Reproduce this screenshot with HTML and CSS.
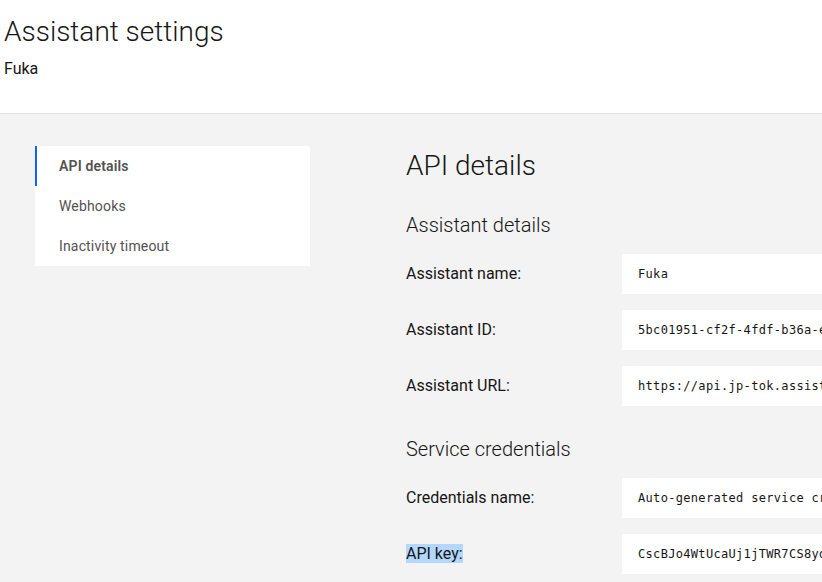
FILE: index.html
```html
<!DOCTYPE html>
<html lang="en">
<head>
<meta charset="utf-8">
<title>Assistant settings</title>
<link rel="stylesheet" href="styles.css">
</head>
<body>
<header class="page-header">
  <h1 class="page-title">Assistant settings</h1>
  <p class="page-subtitle">Fuka</p>
</header>
<div class="content">
  <nav class="side-nav">
    <a class="nav-item active">API details</a>
    <a class="nav-item">Webhooks</a>
    <a class="nav-item">Inactivity timeout</a>
  </nav>
  <main class="details">
    <h2 class="details-title">API details</h2>
    <h3 class="section-title">Assistant details</h3>
    <div class="field-row first">
      <span class="field-label">Assistant name:</span>
      <div class="field-value">Fuka</div>
    </div>
    <div class="field-row">
      <span class="field-label">Assistant ID:</span>
      <div class="field-value">5bc01951-cf2f-4fdf-b36a-e3a1d2c4f870</div>
    </div>
    <div class="field-row">
      <span class="field-label">Assistant URL:</span>
      <div class="field-value">https://api.jp-tok.assistant.watson.cloud.ibm.com</div>
    </div>
    <h3 class="section-title second">Service credentials</h3>
    <div class="field-row first">
      <span class="field-label">Credentials name:</span>
      <div class="field-value">Auto-generated service credentials</div>
    </div>
    <div class="field-row">
      <span class="field-label"><span class="selected">API key:</span></span>
      <div class="field-value">CscBJo4WtUcaUj1jTWR7CS8yd0kQxZ3mPq</div>
    </div>
  </main>
</div>
</body>
</html>
```
FILE: styles.css
```css
* { box-sizing: border-box; }
html, body {
  margin: 0;
  padding: 0;
  height: 100%;
  overflow: hidden;
}
body {
  font-family: "Roboto", "Liberation Sans", sans-serif;
  color: #161616;
  background: #f3f3f3;
}
.page-header {
  background: #ffffff;
  height: 114px;
  border-bottom: 1px solid #e0e0e0;
  padding: 12px 4px 0;
}
.page-title {
  margin: 0;
  font-size: 28px;
  font-weight: 300;
  line-height: 40px;
  color: #161616;
}
.page-subtitle {
  margin: 5px 0 0;
  font-size: 16px;
  line-height: 24px;
  color: #161616;
}
.content {
  display: flex;
  align-items: flex-start;
  padding: 32px 0 0 35px;
}
.side-nav {
  width: 275px;
  background: #ffffff;
  display: flex;
  flex-direction: column;
  flex-shrink: 0;
}
.nav-item {
  height: 40px;
  display: flex;
  align-items: center;
  padding-left: 22px;
  font-size: 14px;
  color: #525252;
  border-left: 2px solid transparent;
  letter-spacing: 0.16px;
}
.nav-item.active {
  border-left-color: #0f62fe;
  font-weight: 600;
}
.details {
  margin-left: 96px;
  flex: 1;
  min-width: 0;
}
.details-title {
  margin: 0;
  font-size: 28px;
  font-weight: 300;
  line-height: 40px;
}
.section-title {
  margin: 25px 0 0;
  font-size: 20px;
  font-weight: 300;
  line-height: 28px;
}
.section-title.second {
  margin-top: 29px;
}
.field-row {
  display: flex;
  align-items: center;
  margin-top: 16px;
}
.field-row.first {
  margin-top: 15px;
}
.field-label {
  width: 216px;
  flex-shrink: 0;
  font-size: 16px;
  line-height: 22px;
  color: #161616;
}
.selected {
  background: #b3d7fe;
}
.field-value {
  flex: 1;
  height: 40px;
  background: #ffffff;
  display: flex;
  align-items: center;
  padding-left: 16px;
  font-family: "DejaVu Sans Mono", "Liberation Mono", monospace;
  font-size: 12px;
  letter-spacing: 0.32px;
  white-space: nowrap;
  overflow: hidden;
  color: #161616;
}
```
